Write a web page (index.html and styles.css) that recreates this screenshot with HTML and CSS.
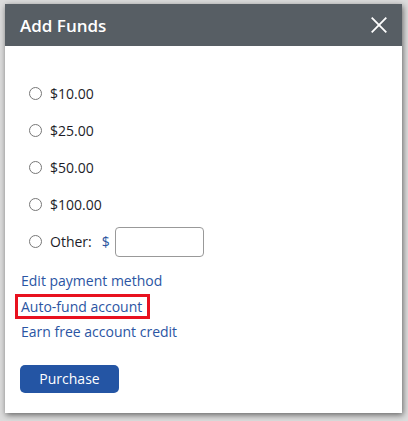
FILE: index.html
```html
<!DOCTYPE html>
<html>
<head>
<meta charset="utf-8">
<link rel="stylesheet" href="styles.css">
</head>
<body>
<div class="dialog">
  <div class="header">
    <span class="title">Add Funds</span>
    <span class="close"><svg width="16" height="16" viewBox="0 0 16 16"><path d="M0.7 0.7 L15.3 15.3 M15.3 0.7 L0.7 15.3" stroke="#fff" stroke-width="1.8" fill="none"/></svg></span>
  </div>
  <div class="content">
    <div class="options">
      <label class="opt"><span class="radio"></span>$10.00</label>
      <label class="opt"><span class="radio"></span>$25.00</label>
      <label class="opt"><span class="radio"></span>$50.00</label>
      <label class="opt"><span class="radio"></span>$100.00</label>
      <label class="opt"><span class="radio"></span>Other:<span class="dollar">$</span><span class="input"></span></label>
    </div>
    <div class="links">
      <a class="link">Edit payment method</a>
      <a class="link boxed">Auto-fund account</a>
      <a class="link">Earn free account credit</a>
    </div>
    <button class="btn">Purchase</button>
  </div>
</div>
</body>
</html>
```
FILE: styles.css
```css
html, body { margin: 0; padding: 0; }
body {
  width: 408px; height: 421px;
  background: #dcdcdc;
  padding: 4px 0 0 5px;
  box-sizing: border-box;
  font-family: "Open Sans", sans-serif;
  overflow: hidden;
}
.dialog {
  width: 397px; height: 409px;
  background: #fff;
  box-shadow: 1px 2px 6px rgba(0,0,0,0.55);
  display: flex; flex-direction: column;
}
.header {
  height: 42px;
  background: #575e64;
  display: flex; align-items: center; justify-content: space-between;
  padding: 0 15px 0 15px;
}
.title { color: #fff; font-size: 17px; font-weight: 600; }
.close { display: flex; width: 16px; height: 16px; margin-top: -1px; }
.content { padding: 29px 0 0 16px; display: flex; flex-direction: column; align-items: flex-start; }
.options { display: flex; flex-direction: column; }
.opt { height: 37px; display: flex; align-items: center; font-size: 14px; color: #1d1d28; }
.radio {
  width: 11px; height: 11px; border: 1px solid #777; border-radius: 50%;
  margin: 0 8px 0 8px;
}
.dollar { color: #2a55a0; margin: 0 5px 0 10px; }
.input {
  width: 89px; height: 30px; border: 1px solid #999; border-radius: 4px; box-sizing: border-box;
}
.links { display: flex; flex-direction: column; align-items: flex-start; margin-top: 8px; }
.link {
  font-size: 14px; color: #2b55a3; line-height: 19.5px;
  padding: 0 5px 0 3px; border: 3px solid transparent; margin-left: -6px;
}
.boxed { border-color: #e8111f; }
.btn {
  margin-top: 20px; margin-left: -1px;
  width: 99px; height: 28px;
  background: #2455a4; color: #fff; border: none; border-radius: 5px;
  font-family: "Open Sans", sans-serif; font-size: 14px;
}
```
